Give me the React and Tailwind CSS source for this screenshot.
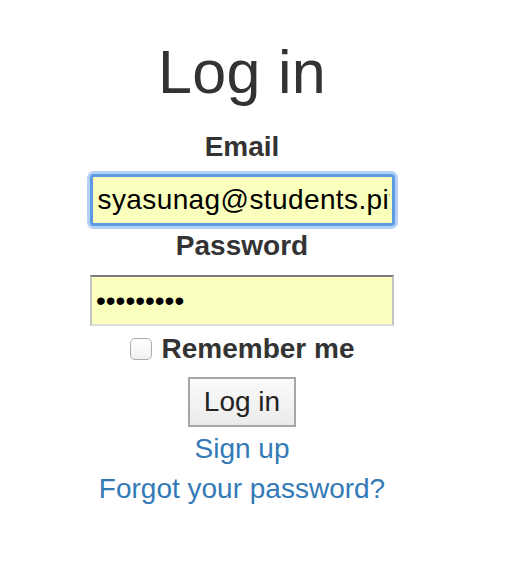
import React from 'react';

const App = () => {
  return (
    <div className="min-h-[578px] bg-white font-['Liberation_Sans',Arial,sans-serif] text-[#333]">
      <div className="w-[484px] flex flex-col items-center text-center">
        <h1 className="mt-[39px] text-[61px] leading-[66px] font-normal tracking-[0.3px]">Log in</h1>

        <form className="mt-[22px] flex flex-col items-center" onSubmit={(e) => e.preventDefault()}>
          <label htmlFor="email" className="block text-[28px] leading-[40px] font-bold">Email</label>
          <input
            id="email"
            type="email"
            defaultValue="syasunag@students.pitt.edu"
            className="mt-[7px] w-[305px] h-[52px] pl-[5px] pr-[2px] text-[28px] tracking-[0.4px] text-black bg-[#faffbd] border-[3px] border-[#5e9be3] rounded-[4px] shadow-[0_0_0_3px_#b3d1f6] outline-none"
          />

          <label htmlFor="password" className="block text-[28px] leading-[40px] font-bold">Password</label>
          <input
            id="password"
            type="password"
            defaultValue="123456789"
            className="mt-[9px] w-[304px] h-[51px] px-[4px] text-[28px] text-black bg-[#faffbd] border-2 border-t-[#7a7a7a] border-x-[#c4c4c4] border-b-[#dcdcdc] outline-none"
          />

          <div className="flex items-center gap-[10px] h-[40px] mt-[3px]">
            <span className="w-[22px] h-[22px] rounded-[5px] border border-[#adadad] bg-gradient-to-b from-white to-[#f1f1f1]" />
            <span className="text-[28px] leading-[40px] font-bold">Remember me</span>
          </div>

          <button
            type="submit"
            className="mt-[8px] w-[108px] h-[50px] text-[28px] text-[#222] border-2 border-[#a6a6a6] bg-gradient-to-b from-[#fbfbfb] to-[#ebebeb]"
          >
            Log in
          </button>
        </form>

        <a href="#" className="block mt-[2px] text-[28px] leading-[40px] text-[#337ab7]">Sign up</a>
        <a href="#" className="block text-[28px] leading-[40px] text-[#337ab7]">Forgot your password?</a>
      </div>
    </div>
  );
};

export default App;
